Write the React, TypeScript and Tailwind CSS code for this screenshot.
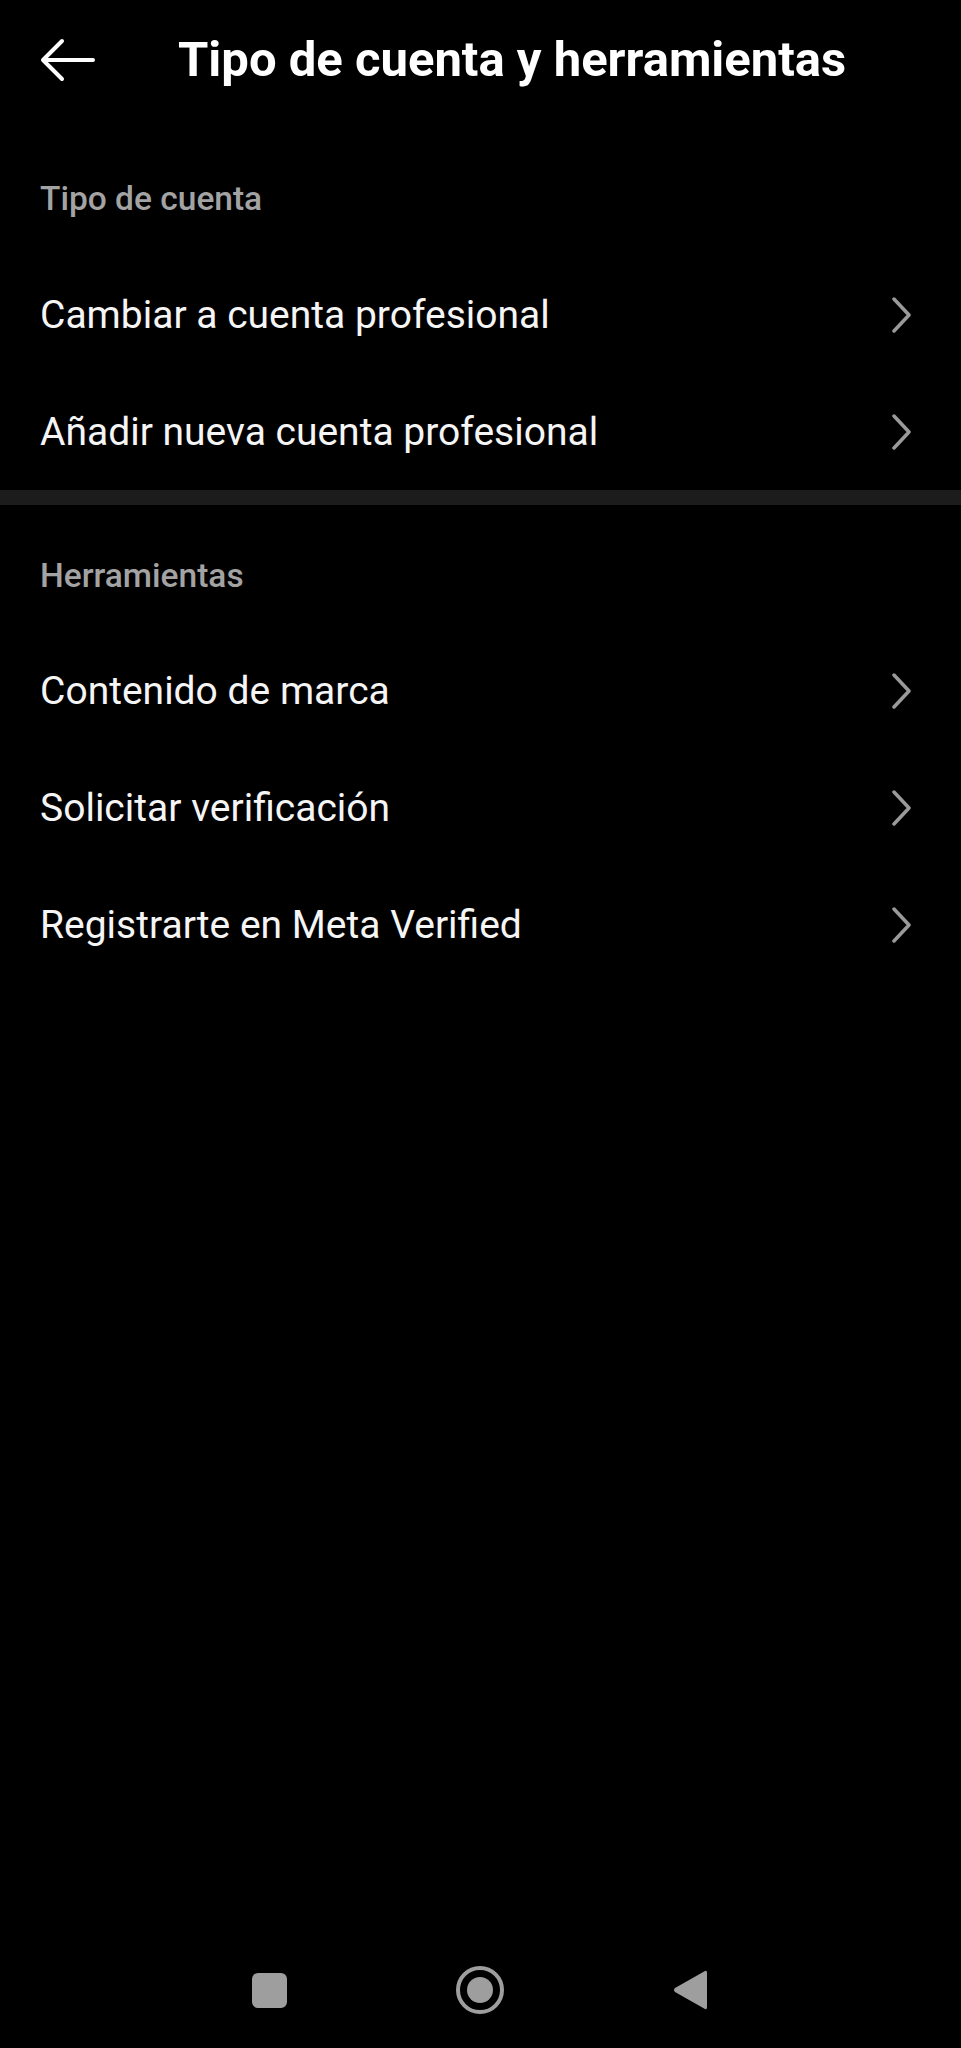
const sections = [
  {
    title: "Tipo de cuenta",
    items: ["Cambiar a cuenta profesional", "Añadir nueva cuenta profesional"],
  },
  {
    title: "Herramientas",
    items: ["Contenido de marca", "Solicitar verificación", "Registrarte en Meta Verified"],
  },
];

const Chevron = () => (
  <svg width="22" height="36" viewBox="0 0 22 36" fill="none">
    <path d="M3 2 L18 18 L3 34" stroke="#9a9a9a" strokeWidth="3.5" strokeLinecap="round" strokeLinejoin="round" />
  </svg>
);

const BackArrow = () => (
  <svg width="56" height="44" viewBox="0 0 56 44" fill="none">
    <path d="M3 22 H53 M22 3 L3 22 L22 41" stroke="#ffffff" strokeWidth="4" strokeLinecap="round" strokeLinejoin="round" />
  </svg>
);

const Row = ({ label }: { label: string }) => (
  <div className="flex h-[117px] items-center justify-between pl-10 pr-[48px]">
    <span className="text-[39px] leading-[46px] text-[#f5f5f5]">{label}</span>
    <Chevron />
  </div>
);

const App = () => {
  return (
    <div
      className="flex flex-col w-full h-[2048px] bg-black"
      style={{ fontFamily: "Roboto, 'Noto Sans', sans-serif" }}
    >
      <div className="flex h-[120px] items-center pl-[40px]">
        <BackArrow />
        <div className="ml-[82px] text-[49px] leading-[58px] font-bold text-white">
          Tipo de cuenta y herramientas
        </div>
      </div>

      <div className="flex flex-col">
        <div className="pl-10 pt-[59px] pb-[37px] text-[33.5px] leading-[40px] font-medium text-[#a3a3a3]">
          {sections[0].title}
        </div>
        {sections[0].items.map((item) => (
          <Row key={item} label={item} />
        ))}
      </div>

      <div className="h-[15px] bg-[#1c1c1c]" />

      <div className="flex flex-col">
        <div className="pl-10 pt-[51px] pb-[36px] text-[33.5px] leading-[40px] font-medium text-[#a3a3a3]">
          {sections[1].title}
        </div>
        {sections[1].items.map((item) => (
          <Row key={item} label={item} />
        ))}
      </div>

      <div className="mt-auto flex h-[116px] items-center justify-between pl-[252px] pr-[253px]">
        <div className="w-[35px] h-[35px] rounded-[6px] bg-[#9e9e9e]" />
        <div className="flex w-[48px] h-[48px] items-center justify-center rounded-full border-[4px] border-[#9e9e9e]">
          <div className="w-[26px] h-[26px] rounded-full bg-[#9e9e9e]" />
        </div>
        <svg width="36" height="42" viewBox="0 0 36 42">
          <path d="M33 2 Q35 1 35 4 V38 Q35 41 33 40 L3 23 Q1 21 3 19 Z" fill="#9e9e9e" />
        </svg>
      </div>
    </div>
  );
};

export default App;
